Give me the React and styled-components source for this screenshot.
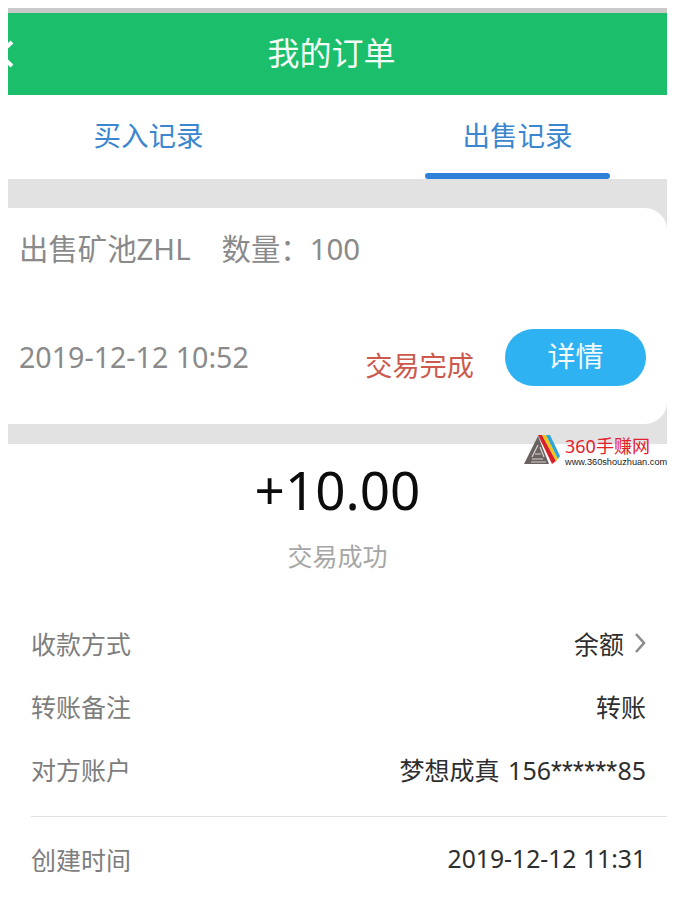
import React from 'react';
import styled, { createGlobalStyle } from 'styled-components';

const GlobalStyle = createGlobalStyle`
  body {
    margin: 8px 8px 0;
    background: #fff;
    font-family: 'Noto Sans', 'Noto Sans CJK SC', sans-serif;
    overflow: hidden;
  }
`;

const Page = styled.div`
  position: relative;
  width: 659px;
  height: 892px;
  overflow: hidden;
`;
const StatusStrip = styled.div`
  height: 5px;
  background: #c9c9c9;
`;
const Header = styled.header`
  height: 82px;
  background: #1bbf6b;
  display: flex;
  align-items: center;
  justify-content: center;
  position: relative;
  overflow: hidden;
`;
const BackIcon = styled.svg`
  position: absolute;
  left: -14px;
  top: 27px;
`;
const HeaderTitle = styled.h1`
  margin: 0 12px 2px 0;
  font-size: 32px;
  line-height: 44px;
  font-weight: 400;
  color: #f4fbf7;
`;
const Tabs = styled.nav`
  height: 84px;
  display: flex;
  justify-content: space-between;
  padding: 0 57px 0 48px;
`;
const Tab = styled.div`
  width: 185px;
  display: flex;
  flex-direction: column;
  align-items: center;
  justify-content: space-between;
  padding-top: 21px;
  font-size: 27.5px;
  line-height: 40px;
  color: #3a86cf;
  &::after {
    content: '';
    width: 185px;
    height: 6px;
    border-radius: 3px;
    background: ${({ $active }) => ($active ? '#2f80d8' : 'transparent')};
  }
`;
const GrayBand = styled.div`
  background: #e2e2e2;
  padding-top: 29px;
  padding-bottom: 20px;
`;
const OrderCard = styled.section`
  height: 216px;
  background: #fff;
  border-radius: 0 22px 22px 0;
  padding: 23px 21px 0 11px;
  box-sizing: border-box;
`;
const OrderTitle = styled.div`
  display: flex;
  gap: 31px;
  font-size: 29.4px;
  line-height: 36px;
  color: #8a8a8a;
`;
const OrderBottom = styled.div`
  margin-top: 62px;
  display: flex;
  align-items: flex-start;
`;
const OrderTime = styled.div`
  font-size: 28.6px;
  line-height: 36px;
  margin-top: 10px;
  color: #8a8a8a;
  flex: 1;
`;
const OrderStatus = styled.div`
  font-size: 27.2px;
  line-height: 36px;
  margin-top: 19px;
  margin-right: 31px;
  color: #cc5a4c;
`;
const DetailButton = styled.button`
  width: 141px;
  height: 57px;
  border: none;
  border-radius: 29px;
  background: #2fb2f2;
  color: #f2fafe;
  font: inherit;
  font-size: 28px;
  line-height: 40px;
  padding: 0 0 4px;
`;
const Watermark = styled.div`
  position: absolute;
  left: 516px;
  top: 425px;
  width: 144px;
  height: 34px;
  display: flex;
  gap: 6px;
`;
const WatermarkText = styled.div`
  display: flex;
  flex-direction: column;
  margin-left: -3px;
`;
const WatermarkName = styled.div`
  font-size: 18px;
  line-height: 22px;
  color: #e3202c;
  white-space: nowrap;
  margin-top: 2px;
`;
const WatermarkUrl = styled.div`
  font-family: 'Liberation Sans', sans-serif;
  font-size: 9.2px;
  line-height: 11px;
  color: #222;
  white-space: nowrap;
`;
const Amount = styled.div`
  margin-top: 13px;
  text-align: center;
  font-size: 53px;
  line-height: 66px;
  color: #0c0c0c;
`;
const AmountNote = styled.div`
  margin-top: 17px;
  text-align: center;
  font-size: 25px;
  line-height: 32px;
  color: #a6a6a6;
`;
const Details = styled.div`
  margin-top: 39px;
  padding-left: 23px;
`;
const Row = styled.div`
  display: flex;
  justify-content: space-between;
  align-items: center;
  height: 63px;
  padding-right: 21px;
  font-size: 25px;
`;
const RowLabel = styled.span`
  color: #7d7d7d;
`;
const RowValue = styled.span`
  display: flex;
  align-items: center;
  gap: 10px;
  font-size: ${({ $size }) => $size || '24.7px'};
  word-spacing: ${({ $wordGap }) => $wordGap || '0'};
  color: #2e2e2e;
`;
const Stars = styled.span`
  font-family: 'Roboto', sans-serif;
  letter-spacing: 0.3px;
`;
const Divider = styled.hr`
  margin: 16px 0 10px;
  border: none;
  height: 1px;
  background: #e2e2e2;
`;

function Logo() {
  return (
    <svg width="38" height="34" viewBox="0 0 38 34">
      <polygon points="0,31 14,3 25,31" fill="#6a6260" />
      <path d="M8 26 L19 26 M11 21 L17 21 M7 29 L22 29 M14 12 L8 24 M16 14 L20 24" stroke="#d8d4d2" strokeWidth="1.2" fill="none" />
      <polygon points="14,2 18,2 32,28 28,31" fill="#d9202a" />
      <polygon points="18,2 22,2 34,26 32,28" fill="#f2c417" />
      <polygon points="22,2 26,2 36,23 34,26" fill="#2ba6dd" />
    </svg>
  );
}

export default function App() {
  return (
    <>
      <GlobalStyle />
      <Page>
        <StatusStrip />
        <Header>
          <BackIcon width="20" height="28" viewBox="0 0 20 28">
            <path d="M18 2 L5 14 L18 26" fill="none" stroke="#fff" strokeWidth="4" />
          </BackIcon>
          <HeaderTitle>我的订单</HeaderTitle>
        </Header>
        <Tabs>
          <Tab>买入记录</Tab>
          <Tab $active>出售记录</Tab>
        </Tabs>
        <GrayBand>
          <OrderCard>
            <OrderTitle>
              <span>出售矿池ZHL</span>
              <span>数量：100</span>
            </OrderTitle>
            <OrderBottom>
              <OrderTime>2019-12-12 10:52</OrderTime>
              <OrderStatus>交易完成</OrderStatus>
              <DetailButton>详情</DetailButton>
            </OrderBottom>
          </OrderCard>
        </GrayBand>
        <Watermark>
          <Logo />
          <WatermarkText>
            <WatermarkName>360手赚网</WatermarkName>
            <WatermarkUrl>www.360shouzhuan.com</WatermarkUrl>
          </WatermarkText>
        </Watermark>
        <Amount>+10.00</Amount>
        <AmountNote>交易成功</AmountNote>
        <Details>
          <Row>
            <RowLabel>收款方式</RowLabel>
            <RowValue $size="25px">
              余额
              <svg width="12" height="22" viewBox="0 0 12 22">
                <path d="M2 2 L10 11 L2 20" fill="none" stroke="#8c8c8c" strokeWidth="2.6" />
              </svg>
            </RowValue>
          </Row>
          <Row>
            <RowLabel>转账备注</RowLabel>
            <RowValue $size="25px">转账</RowValue>
          </Row>
          <Row>
            <RowLabel>对方账户</RowLabel>
            <RowValue $size="25px" $wordGap="2px">
              <span>梦想成真 156<Stars>******</Stars>85</span>
            </RowValue>
          </Row>
          <Divider />
          <Row>
            <RowLabel>创建时间</RowLabel>
            <RowValue>2019-12-12 11:31</RowValue>
          </Row>
        </Details>
      </Page>
    </>
  );
}
